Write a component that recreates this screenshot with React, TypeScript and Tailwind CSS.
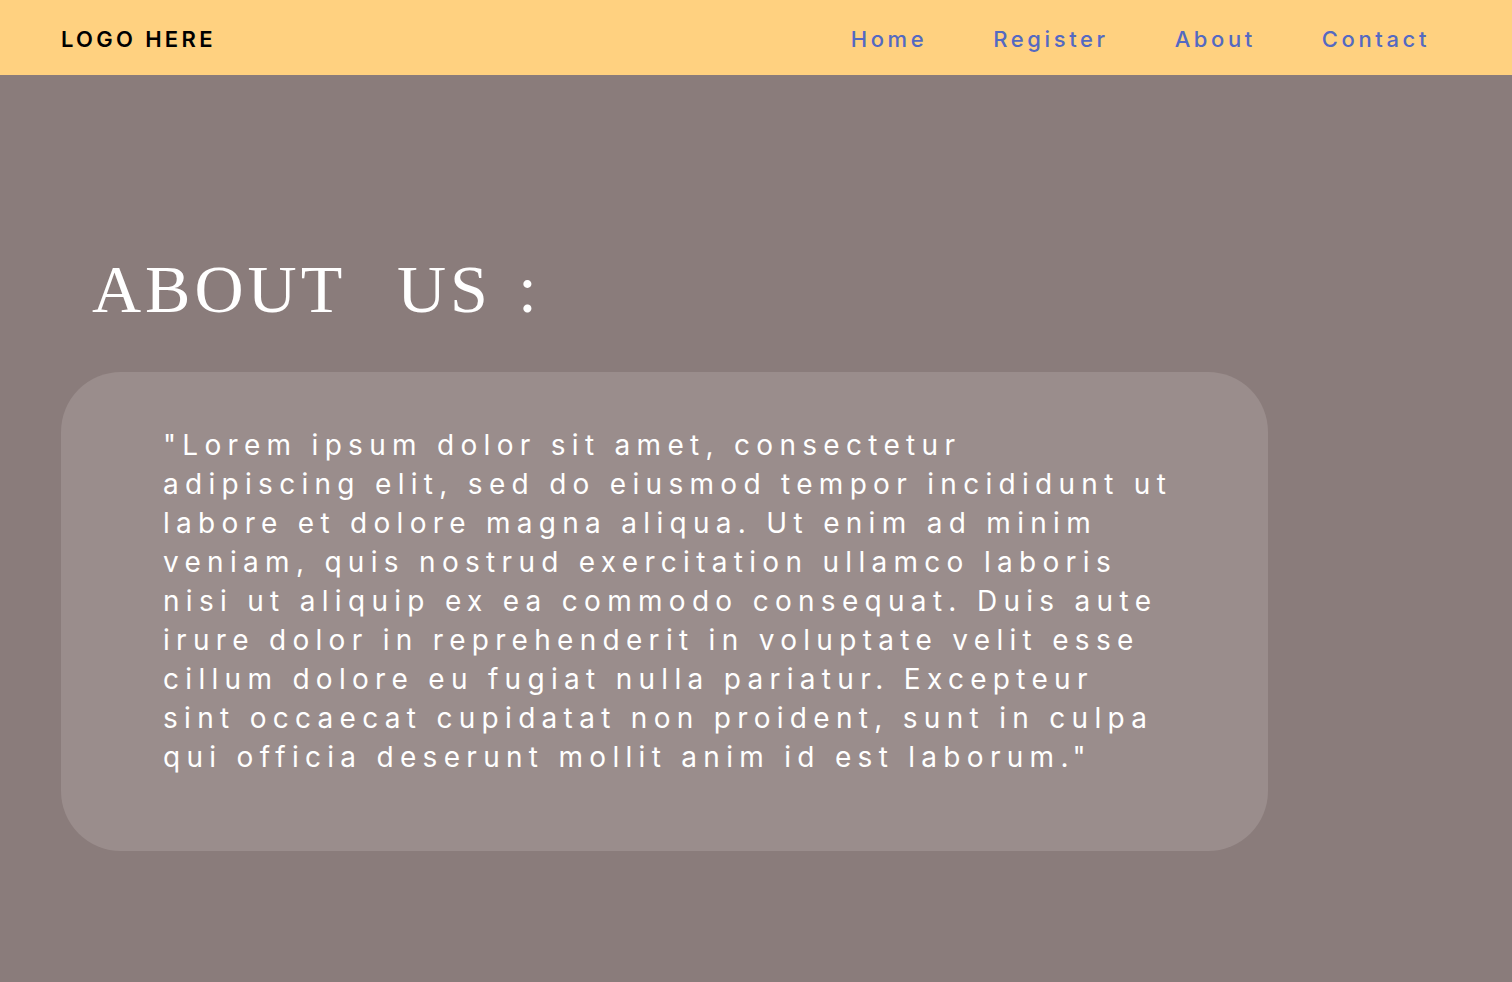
import React from 'react'

const links = ['Home', 'Register', 'About', 'Contact']

const App = () => {
  return (
    <div className="min-h-[982px] bg-[#8a7c7b] font-['Inter',sans-serif]">
      {/* Header */}
      <header className="h-[75px] bg-[#ffd180] flex items-center justify-between pt-1 pl-[61px] pr-[82px]">
        <div className="text-[22px] font-semibold tracking-[3.3px] text-black">LOGO HERE</div>
        <nav className="flex items-center gap-[66px]">
          {links.map(link => (
            <a key={link} href="#" className="text-[22px] font-medium tracking-[3.6px] text-[#5469c2]">
              {link}
            </a>
          ))}
        </nav>
      </header>

      {/* About */}
      <main className="px-[61px] pt-[180px]">
        <h1 className="pl-[31px] font-['Liberation_Serif',serif] text-[68px] leading-none tracking-[4px] [word-spacing:5px] text-white whitespace-pre">
          ABOUT  US :
        </h1>
        <div className="mt-[49px] w-[1207px] rounded-[60px] bg-[#9a8d8c] pl-[102px] pr-[95px] pt-[54px] pb-[74px]">
          <p className="text-[28px] leading-[39px] tracking-[6.3px] text-white">
            "Lorem ipsum dolor sit amet, consectetur adipiscing elit, sed do eiusmod tempor incididunt ut labore et
            dolore magna aliqua. Ut enim ad minim veniam, quis nostrud exercitation ullamco laboris nisi ut aliquip
            ex ea commodo consequat. Duis aute irure dolor in reprehenderit in voluptate velit esse cillum dolore eu
            fugiat nulla pariatur. Excepteur sint occaecat cupidatat non proident, sunt in culpa qui officia deserunt
            mollit anim id est laborum."
          </p>
        </div>
      </main>
    </div>
  )
}

export default App
